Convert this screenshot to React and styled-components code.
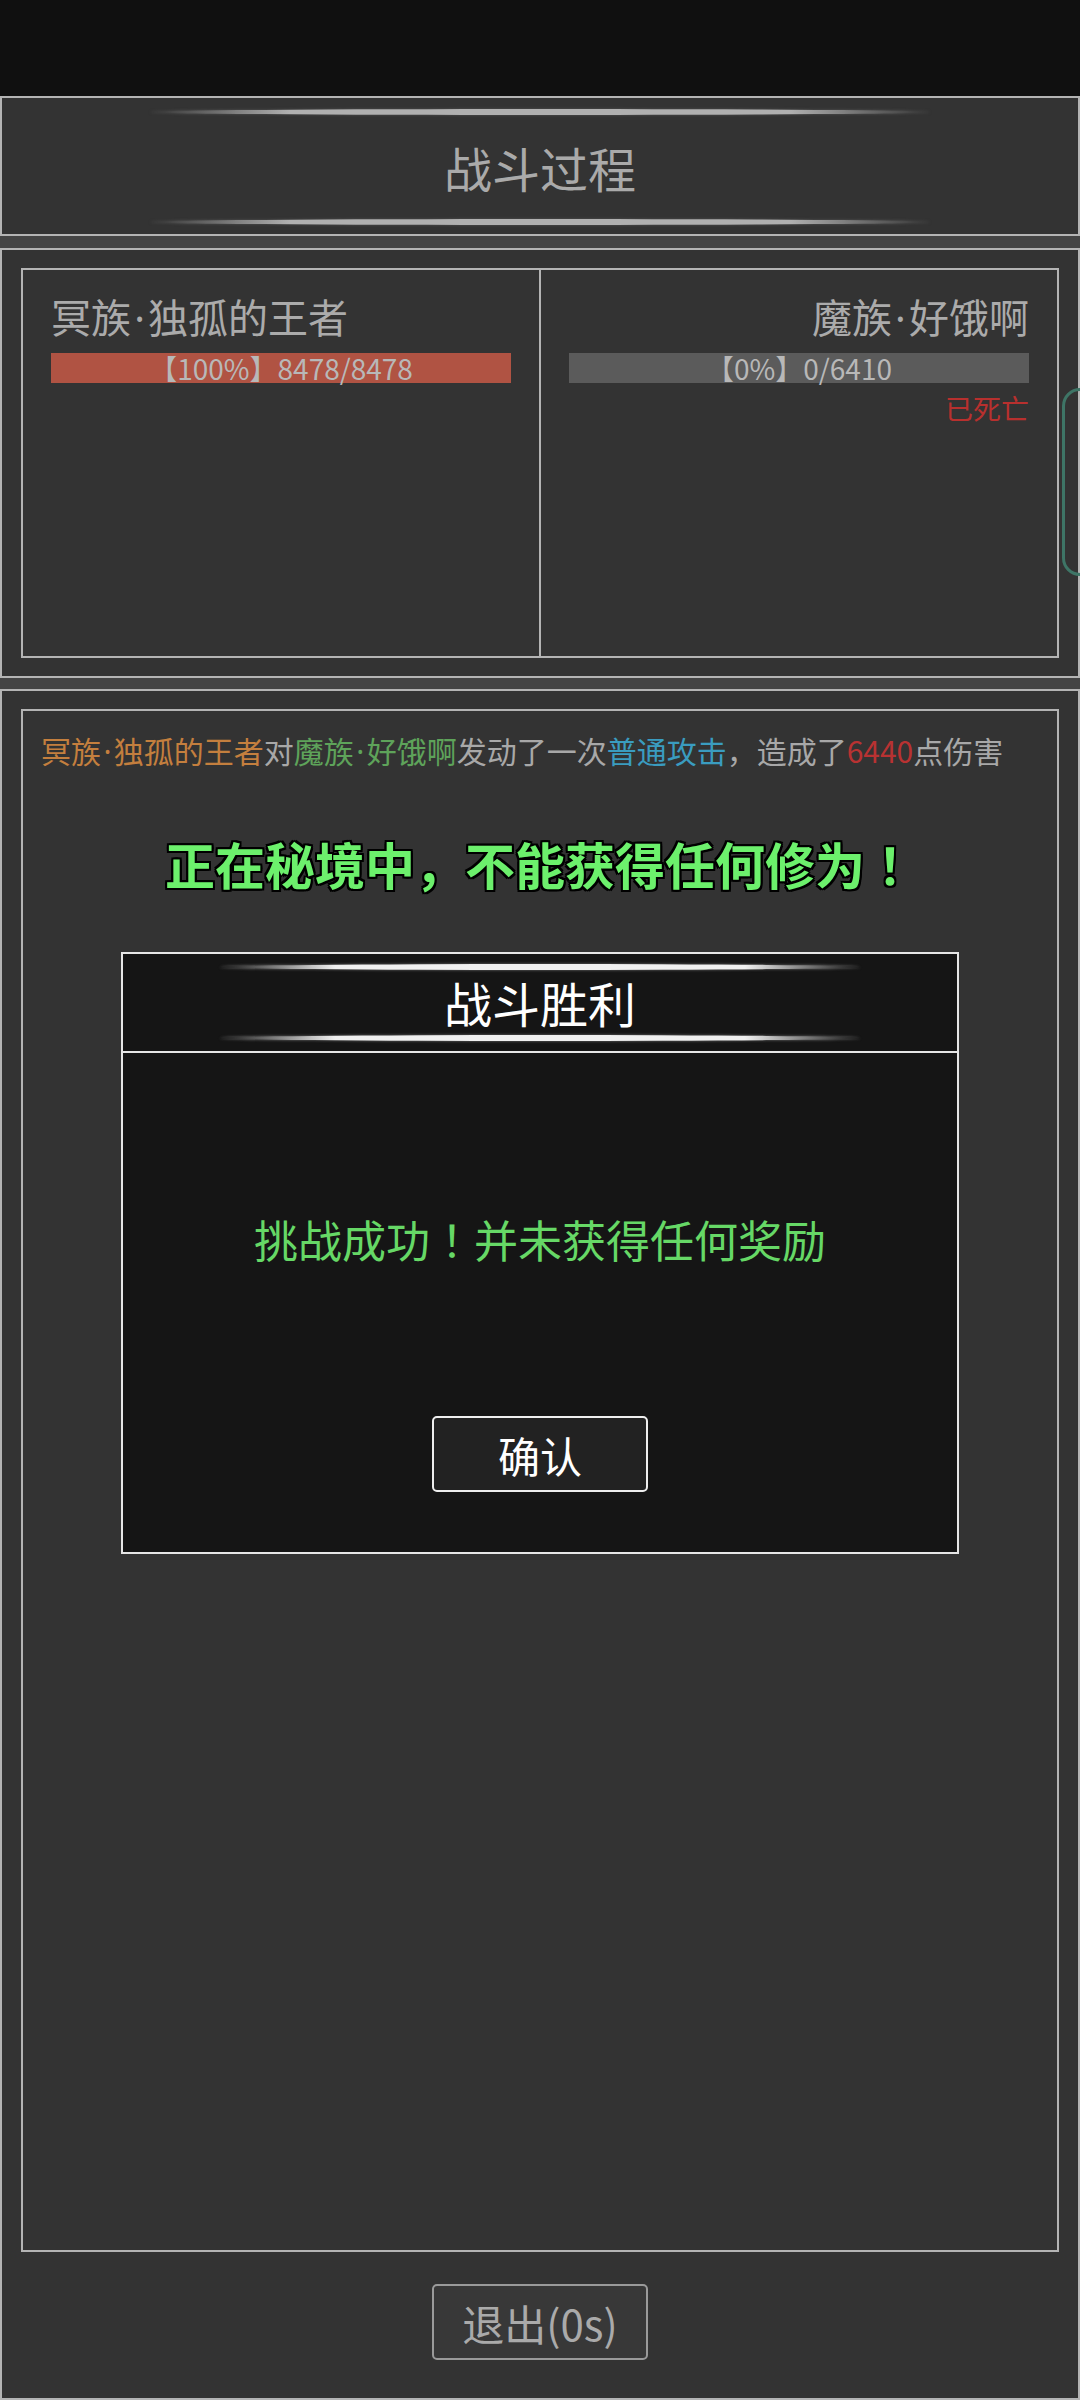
import React from 'react';
import styled, { createGlobalStyle } from 'styled-components';

const GlobalStyle = createGlobalStyle`
  * { box-sizing: border-box; }
  html, body {
    margin: 0;
    padding: 0;
    background: #101010;
    overflow: hidden;
    font-family: "Noto Sans CJK SC", "Noto Sans", sans-serif;
  }
`;

const Page = styled.div`
  width: 1080px;
  height: 2400px;
  display: flex;
  flex-direction: column;
  background: #444;
  position: relative;
  overflow: hidden;
`;

const StatusBar = styled.div`
  height: 96px;
  background: #101010;
  flex-shrink: 0;
`;

const Section = styled.div`
  background: #333;
  border: 2px solid #b4b4b4;
  flex-shrink: 0;
  position: relative;
  ${p => p.$grow && 'flex: 1; display: flex; flex-direction: column;'}
  ${p => p.$pad && `padding: ${p.$pad};`}
`;

const Gap = styled.div`
  height: ${p => p.$h}px;
  flex-shrink: 0;
`;

const TitleBlock = styled.div`
  display: flex;
  flex-direction: column;
  align-items: center;
  padding: ${p => p.$pad};
`;

const Glow = styled.div`
  width: ${p => p.$w}px;
  height: 6px;
  border-radius: 50%;
  background: linear-gradient(
    to right,
    rgba(0, 0, 0, 0) 0%,
    ${p => p.$color} 18%,
    ${p => p.$color} 82%,
    rgba(0, 0, 0, 0) 100%
  );
  box-shadow: 0 0 3px ${p => p.$shade};
`;

const Title = styled.div`
  font-size: 48px;
  line-height: ${p => p.$lh}px;
  color: ${p => p.$color};
`;

const VsBox = styled.div`
  border: 2px solid #b4b4b4;
  height: 390px;
  display: grid;
  grid-template-columns: 1fr 2px 1fr;
`;

const Divider = styled.div`
  background: #b4b4b4;
`;

const Fighter = styled.div`
  padding: 22px 28px 0;
  display: flex;
  flex-direction: column;
  align-items: ${p => (p.$right ? 'flex-end' : 'flex-start')};
`;

const Name = styled.div`
  font-size: 40px;
  line-height: 49px;
  color: #ababab;
`;

/* narrow middle dot, as the latin face draws it */
const Dot = styled.span`
  font-family: "Noto Sans", "DejaVu Sans", sans-serif;
  margin: 0 0.08em;
`;

/* centred full-width exclamation mark */
const Bang = styled.span`
  font-family: "Noto Sans CJK TC", "Noto Sans CJK SC", sans-serif;
`;

const HpBar = styled.div`
  margin-top: 11px;
  width: 100%;
  height: 30px;
  background: ${p => p.$color};
  color: #b8b8b8;
  font-size: 28px;
  line-height: 30px;
  text-align: center;
  white-space: nowrap;
`;

const Dead = styled.div`
  margin-top: 7px;
  font-size: 28px;
  line-height: 36px;
  color: #b8302e;
`;

const SideTab = styled.div`
  position: absolute;
  right: -40px;
  top: 138px;
  width: 56px;
  height: 188px;
  border: 3px solid #3e7566;
  border-radius: 18px;
`;

const LogBox = styled.div`
  flex: 1;
  border: 2px solid #b4b4b4;
  padding: 18px 18px;
  display: flex;
  flex-direction: column;
`;

const LogLine = styled.div`
  font-size: 30px;
  line-height: 42px;
  color: #a8a8a8;
  white-space: nowrap;
`;

const Tint = styled.span`
  color: ${p => p.$c};
`;

const Notice = styled.div`
  margin: 57px 0 56px;
  text-align: center;
  font-size: 50px;
  font-weight: 700;
  line-height: 66px;
  color: #6cf06c;
  text-shadow:
    2px 0 0 #000, -2px 0 0 #000, 0 2px 0 #000, 0 -2px 0 #000,
    2px 2px 0 #000, -2px -2px 0 #000, 2px -2px 0 #000, -2px 2px 0 #000;
`;

const Modal = styled.div`
  width: 838px;
  margin: 0 auto;
  background: #151515;
  border: 2px solid #e6e6e6;
`;

const ModalHead = styled.div`
  border-bottom: 2px solid #e6e6e6;
`;

const ModalBody = styled.div`
  padding: 156px 0 60px;
  display: flex;
  flex-direction: column;
  align-items: center;
`;

const Reward = styled.div`
  font-size: 44px;
  line-height: 60px;
  color: #66d866;
`;

const Btn = styled.div`
  width: 216px;
  height: 76px;
  display: flex;
  align-items: center;
  justify-content: center;
  border: 2px solid ${p => p.$border};
  border-radius: 5px;
  background: ${p => p.$bg};
  color: ${p => p.$color};
  font-size: 42px;
  margin-top: ${p => p.$mt || 0}px;
`;

const Footer = styled.div`
  display: flex;
  justify-content: center;
  padding: 32px 0 38px;
`;

export default function App() {
  return (
    <>
      <GlobalStyle />
      <Page>
        <StatusBar />
        <Section>
          <TitleBlock $pad="11px 0 9px">
            <Glow $w={780} $color="#b0b0b0" $shade="#555" />
            <Title $lh={104} $color="#aaa">战斗过程</Title>
            <Glow $w={780} $color="#b0b0b0" $shade="#555" />
          </TitleBlock>
        </Section>
        <Gap $h={12} />
        <Section $pad="18px 19px">
          <VsBox>
            <Fighter>
              <Name>冥族<Dot>·</Dot>独孤的王者</Name>
              <HpBar $color="#b05343">【100%】8478/8478</HpBar>
            </Fighter>
            <Divider />
            <Fighter $right>
              <Name>魔族<Dot>·</Dot>好饿啊</Name>
              <HpBar $color="#5b5b5b">【0%】0/6410</HpBar>
              <Dead>已死亡</Dead>
            </Fighter>
          </VsBox>
          <SideTab />
        </Section>
        <Gap $h={11} />
        <Section $grow $pad="18px 19px 0">
          <LogBox>
            <LogLine>
              <Tint $c="#c47f3e">冥族<Dot>·</Dot>独孤的王者</Tint>对
              <Tint $c="#5ea35a">魔族<Dot>·</Dot>好饿啊</Tint>发动了一次
              <Tint $c="#3a9cc0">普通攻击</Tint>，造成了
              <Tint $c="#b83232">6440</Tint>点伤害
            </LogLine>
            <Notice>正在秘境中，不能获得任何修为<Bang>！</Bang></Notice>
            <Modal>
              <ModalHead>
                <TitleBlock $pad="10px 0 10px">
                  <Glow $w={640} $color="#f0f0f0" $shade="#777" />
                  <Title $lh={65} $color="#fff">战斗胜利</Title>
                  <Glow $w={640} $color="#f0f0f0" $shade="#777" />
                </TitleBlock>
              </ModalHead>
              <ModalBody>
                <Reward>挑战成功<Bang>！</Bang>并未获得任何奖励</Reward>
                <Btn $mt={147} $border="#eee" $bg="#222" $color="#fff">确认</Btn>
              </ModalBody>
            </Modal>
          </LogBox>
          <Footer>
            <Btn $border="#9a9a9a" $bg="#383838" $color="#aaa">退出(0s)</Btn>
          </Footer>
        </Section>
      </Page>
    </>
  );
}
